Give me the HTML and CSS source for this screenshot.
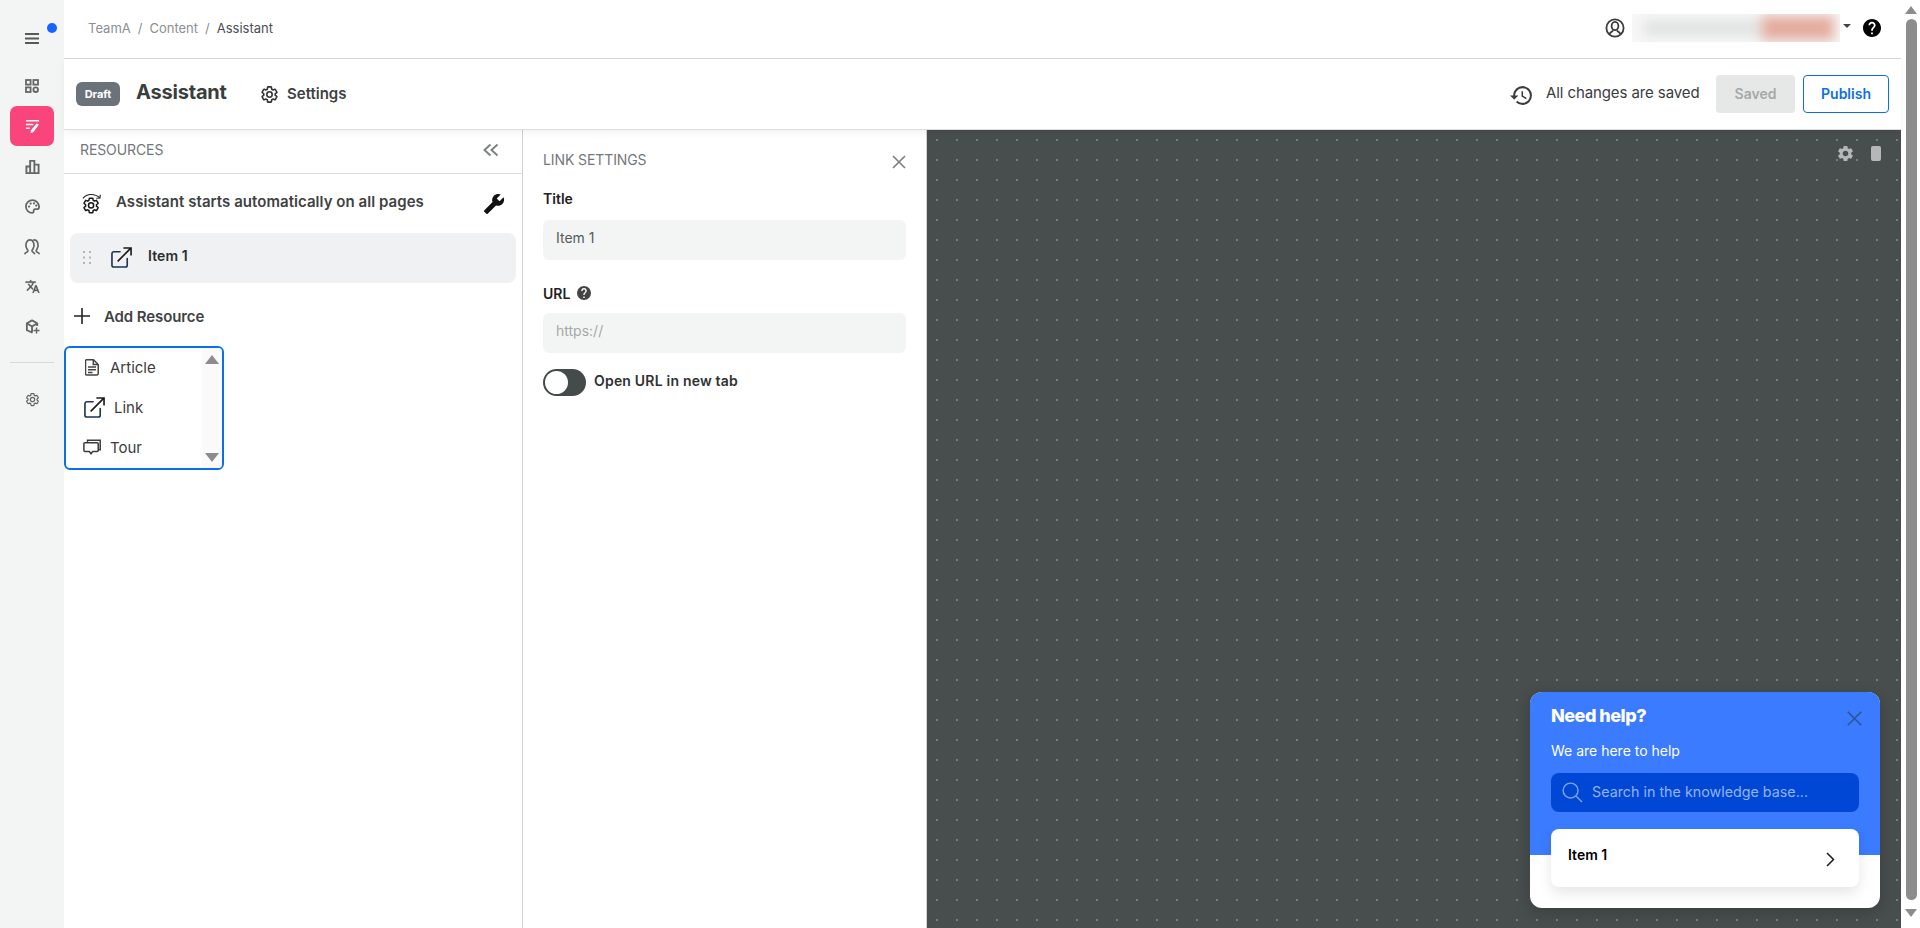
FILE: index.html
```html
<!DOCTYPE html>
<html lang="en">
<head>
<meta charset="utf-8">
<title>Assistant</title>
<link rel="stylesheet" href="styles.css">
</head>
<body>
<svg class="sprite" xmlns="http://www.w3.org/2000/svg">
  <symbol id="gear" viewBox="0 0 24 24"><path fill="none" stroke="currentColor" stroke-width="2" stroke-linejoin="round" d="M19.14 12.94c.04-.3.06-.61.06-.94 0-.32-.02-.64-.07-.94l2.03-1.58c.18-.14.23-.41.12-.61l-1.92-3.32c-.12-.22-.37-.29-.59-.22l-2.39.96c-.5-.38-1.03-.7-1.62-.94l-.36-2.54c-.04-.24-.24-.41-.48-.41h-3.84c-.24 0-.43.17-.47.41l-.36 2.54c-.59.24-1.13.57-1.62.94l-2.39-.96c-.22-.08-.47 0-.59.22L2.74 8.87c-.12.21-.08.47.12.61l2.03 1.58c-.05.3-.09.63-.09.94s.02.64.07.94l-2.03 1.58c-.18.14-.23.41-.12.61l1.92 3.32c.12.22.37.29.59.22l2.39-.96c.5.38 1.03.7 1.62.94l.36 2.54c.05.24.24.41.48.41h3.84c.24 0 .44-.17.47-.41l.36-2.54c.59-.24 1.13-.56 1.62-.94l2.39.96c.22.08.47 0 .59-.22l1.92-3.32c.12-.22.07-.47-.12-.61z"/><circle cx="12" cy="12" r="3.4" fill="none" stroke="currentColor" stroke-width="2"/></symbol>
  <symbol id="extlink" viewBox="0 0 22 22"><path fill="none" stroke="#1f3354" stroke-width="1.7" stroke-linecap="round" d="M9.5 5H3a2 2 0 0 0-2 2v12a2 2 0 0 0 2 2h12a2 2 0 0 0 2-2v-7"/><path fill="none" stroke="#1a1a1a" stroke-width="1.7" d="M7 15 20.5 1.5M13 1h8v8"/></symbol>
</svg>
<div class="page">
  <aside class="rail">
    <div class="rail-menu">
      <svg class="ico" viewBox="0 0 14 11"><path fill="#555a5a" d="M0 0h14v2H0zM0 4.5h14v2H0zM0 9h14v2H0z"/></svg>
      <span class="notif"></span>
    </div>
    <a class="rail-item"><svg class="ico" viewBox="0 0 14 14"><g fill="none" stroke="#636767" stroke-width="1.8"><rect x="1" y="1" width="4.6" height="4.6"/><rect x="8.4" y="1" width="4.6" height="4.6"/><rect x="1" y="8.4" width="4.6" height="4.6"/><circle cx="10.7" cy="10.7" r="2.3"/></g></svg></a>
    <a class="rail-item active"><svg class="ico-lg" viewBox="0 0 16 16"><path fill="#fff" d="M1 1h14v1.6H1zM1 5h8v1.6H1zM1 9h4v1.6H1z"/><path fill="#fff" d="M12.6 4.4l2.2 1.6-6 8-2.9 1 .5-3z"/></svg></a>
    <a class="rail-item"><svg class="ico-lg" viewBox="0 0 16 16"><path fill="none" stroke="#636767" stroke-width="2" d="M1.5 8H5.5V15H1.500zM5.500 2H10V15H5.500zM10 6H14.500V15H10z"/></svg></a>
    <a class="rail-item"><svg class="ico-lg" viewBox="0 0 16 16"><path fill="none" stroke="#636767" stroke-width="1.9" d="M8 1.200C4.200 1.200 1 4.200 1 8s3 6.800 6.600 6.800c1.200 0 1.800-.8 1.600-1.700-.2-1 .2-2.300 1.700-2.300h2.100c1.300 0 2-1 2-2.400C14.900 4.200 11.800 1.200 8 1.200z"/><g fill="#636767"><circle cx="4.300" cy="8" r="1.200"/><circle cx="6" cy="4.800" r="1.200"/><circle cx="9.600" cy="4.600" r="1.200"/><circle cx="12" cy="7" r="1.200"/></g></svg></a>
    <a class="rail-item"><svg class="ico-xl" viewBox="0 0 18 18"><g fill="none" stroke="#636767" stroke-width="1.800" stroke-linecap="round"><path d="M1 16.500c.5-1 2.300-1.500 3-2.500.5-.8-.3-1.300-.9-2.500C2 9.500 1.800 7 2.500 5c.8-2 2.300-3 3.900-3s3 1 3.700 3c.7 2 .5 4.500-.6 6.500-.6 1.200-1.400 1.700-.9 2.500.7 1 2 1.500 2.500 2.500"/><path d="M10.500 2c1.700 0 3.300 1 4 3 .7 2 .5 4.500-.6 6.500-.6 1.200-1.400 1.700-.9 2.500.7 1 2.400 1.500 3 2.500"/></g></svg></a>
    <a class="rail-item"><svg class="ico-lg" viewBox="0 0 24 24"><path fill="#555a5a" stroke="#555a5a" stroke-width=".6" d="M12.870 15.070l-2.540-2.510.03-.03c1.740-1.940 2.980-4.170 3.710-6.530H17V4h-7V2H8v2H1v1.990h11.170C11.500 7.920 10.440 9.750 9 11.350 8.070 10.320 7.300 9.190 6.690 8h-2c.73 1.630 1.730 3.170 2.980 4.560l-5.090 5.020L4 19l5-5 3.110 3.110.76-2.040zM18.500 10h-2L12 22h2l1.120-3h4.750L21 22h2l-4.500-12zm-2.620 7l1.620-4.330L19.120 17h-3.240z"/></svg></a>
    <a class="rail-item"><svg class="ico-lg" viewBox="0 0 16 16"><path fill="none" stroke="#636767" stroke-width="2" stroke-linejoin="round" d="M8 14.600 2 12V4.500L7.500 1.500l5.500 3v3M2 4.500 7.500 8l5.500-3.500M7.500 8v6.500"/><path fill="#636767" d="M11.500 9h1.600v2.400h2.400V13h-2.400v2.400h-1.600V13H9.100v-1.600h2.400z"/></svg></a>
    <hr class="rail-sep">
    <a class="rail-item"><svg class="ico-lg gear-grey"><use href="#gear"/></svg></a>
  </aside>

  <div class="main">
    <header class="topbar">
      <nav class="crumbs"><span>TeamA</span><i>/</i><span>Content</span><i>/</i><b>Assistant</b></nav>
      <div class="top-right">
        <svg class="user-ico" viewBox="0 0 20 20"><g fill="none" stroke="#3c3c3c" stroke-width="1.800"><circle cx="10" cy="10" r="8.600"/><ellipse cx="10" cy="8" rx="3.400" ry="4.200"/><path d="M4.500 16c1-2 2.600-2.200 3.500-3.500M15.500 16c-1-2-2.600-2.200-3.500-3.500"/></g></svg>
        <div class="blurbox"><span class="blur-a"></span><span class="blur-b"></span></div>
        <span class="caret"></span>
        <svg class="help-ico" viewBox="2 2 20 20"><path fill="#000" d="M12 2C6.480 2 2 6.480 2 12s4.480 10 10 10 10-4.480 10-10S17.520 2 12 2zm1 17h-2v-2h2v2zm2.070-7.750l-.9.920C13.450 12.900 13 13.500 13 15h-2v-.5c0-1.100.45-2.100 1.170-2.830l1.240-1.260c.37-.36.590-.86.590-1.410 0-1.100-.9-2-2-2s-2 .9-2 2H8c0-2.210 1.790-4 4-4s4 1.790 4 4c0 .88-.36 1.680-.93 2.250z"/></svg>
      </div>
    </header>

    <div class="toolbar">
      <span class="badge">Draft</span>
      <h1 class="doc-title">Assistant</h1>
      <a class="settings-link"><svg class="settings-ico"><use href="#gear"/></svg><span>Settings</span></a>
      <div class="save-area">
        <svg class="history-ico" viewBox="1 3 22 18"><path fill="#3c3c3c" d="M13 3a9 9 0 0 0-9 9H1l3.890 3.890.07.14L9 12H6c0-3.870 3.130-7 7-7s7 3.130 7 7-3.130 7-7 7c-1.930 0-3.680-.79-4.940-2.060l-1.420 1.420A8.954 8.954 0 0 0 13 21a9 9 0 0 0 0-18zm-1 5v5l4.280 2.540.72-1.210-3.500-2.080V8H12z"/></svg>
        <span class="save-text">All changes are saved</span>
        <button class="btn btn-saved">Saved</button>
        <button class="btn btn-publish">Publish</button>
      </div>
    </div>

    <div class="workspace">
      <section class="resources">
        <div class="res-head">
          <span class="caps">RESOURCES</span>
          <svg class="collapse-ico" viewBox="0 0 16 13"><path fill="none" stroke="#7d8282" stroke-width="2" d="M7.500 1 1.500 6.500l6 5.500M14.500 1l-6 5.500 6 5.500"/></svg>
        </div>
        <div class="auto-row">
          <svg class="auto-ico" viewBox="0 0 22 22"><path fill="none" stroke="#1a1a1a" stroke-width="1.200" d="M1 5C3 2.500 6 1 9.500 1c3.500 0 6.500 1 9 3.500"/><path fill="none" stroke="#1a1a1a" stroke-width="1.200" d="M15 5l3.800-.3.300-3.400"/><svg x="0" y="3" width="19" height="19" class="auto-gear"><use href="#gear"/></svg></svg>
          <span class="auto-text">Assistant starts automatically on all pages</span>
          <svg class="wrench-ico" viewBox="0 0 24 24"><path fill="#111" transform="matrix(-1 0 0 1 24 0)" d="M22.700 19l-9.100-9.100c.9-2.300.4-5-1.500-6.900-2-2-5-2.400-7.400-1.300L9 6 6 9 1.600 4.700C.4 7.100.9 10.100 2.900 12.100c1.900 1.900 4.600 2.400 6.900 1.500l9.100 9.100c.4.400 1 .4 1.400 0l2.300-2.300c.5-.4.5-1.100.1-1.400z"/></svg>
        </div>
        <div class="item-row">
          <svg class="drag-ico" viewBox="0 0 8 13"><g fill="#b3b5b5"><rect width="2" height="2"/><rect x="6" width="2" height="2"/><rect y="5.500" width="2" height="2"/><rect x="6" y="5.500" width="2" height="2"/><rect y="11" width="2" height="2"/><rect x="6" y="11" width="2" height="2"/></g></svg>
          <svg class="ext-ico"><use href="#extlink"/></svg>
          <span class="item-name">Item 1</span>
        </div>
        <div class="add-row">
          <svg class="plus-ico" viewBox="0 0 16 16"><path fill="#222" d="M7.200 0h1.600v7.200H16v1.600H8.800V16H7.200V8.800H0V7.200h7.200z"/></svg>
          <span class="add-text">Add Resource</span>
        </div>
        <div class="picker">
          <ul class="picker-list">
            <li class="picker-item">
              <svg class="pick-doc" viewBox="0 0 14 17"><path fill="none" stroke="#444" stroke-width="1.500" stroke-linejoin="round" d="M1.500.8h7l4.700 4.700v9.200a1.200 1.200 0 0 1-1.200 1.200H1.500a1 1 0 0 1-1-1V1.800a1 1 0 0 1 1-1z"/><path fill="none" stroke="#444" stroke-width="1.500" d="M3 8h8M3 10.800h8M3 13.600h4.500M8.300 1v4.500h4.700"/></svg>
              <span>Article</span>
            </li>
            <li class="picker-item item-link">
              <svg class="pick-ext"><use href="#extlink"/></svg>
              <span>Link</span>
            </li>
            <li class="picker-item">
              <svg class="pick-tour" viewBox="0 0 18 16"><g fill="none" stroke="#3c3c3c" stroke-width="1.500"><path d="M4.500 3V1.200h12.700v9.600h-2"/><path d="M1.900 3.800h12.300a1 1 0 0 1 1 1v6.600a1 1 0 0 1-1 1H9.800L8 14.800l-1.800-2.400H1.900a1 1 0 0 1-1-1V4.800a1 1 0 0 1 1-1z"/></g></svg>
              <span>Tour</span>
            </li>
          </ul>
          <div class="picker-scroll"><span class="arrow-up"></span><span class="arrow-down"></span></div>
        </div>
      </section>

      <section class="link-panel">
        <div class="link-head">
          <span class="caps">LINK SETTINGS</span>
          <svg class="close-ico" viewBox="0 0 14 14"><path fill="none" stroke="#7d8282" stroke-width="1.700" d="M1 1l12 12M13 1 1 13"/></svg>
        </div>
        <label class="field-label">Title</label>
        <div class="field value">Item 1</div>
        <label class="field-label url-label">URL
          <svg class="tip-ico" viewBox="2 2 20 20"><circle cx="12" cy="12" r="10" fill="#444"/><path fill="#fff" d="M11 17h2v2h-2zM12 5c-2.210 0-4 1.790-4 4h2c0-1.100.9-2 2-2s2 .9 2 2c0 .55-.22 1.050-.59 1.410l-1.240 1.260C11.450 12.400 11 13.400 11 14.500v.5h2c0-1.500.45-2.100 1.170-2.830l.9-.92C15.640 10.680 16 9.880 16 9c0-2.210-1.790-4-4-4z"/></svg>
        </label>
        <div class="field placeholder">https://</div>
        <div class="toggle-row">
          <span class="toggle"><span class="knob"></span></span>
          <span class="toggle-label">Open URL in new tab</span>
        </div>
      </section>

      <section class="canvas">
        <div class="canvas-tools">
          <svg class="tool-gear" viewBox="0 0 24 24"><path fill="#b5b8b8" d="M19.140 12.940c.04-.3.06-.61.06-.94 0-.32-.02-.64-.07-.94l2.030-1.580c.18-.14.23-.41.12-.61l-1.920-3.320c-.12-.22-.37-.29-.59-.22l-2.390.96c-.5-.38-1.030-.7-1.620-.94l-.36-2.540c-.04-.24-.24-.41-.48-.41h-3.840c-.24 0-.43.17-.47.41l-.36 2.540c-.59.24-1.130.57-1.620.94l-2.390-.96c-.22-.08-.47 0-.59.22L2.740 8.870c-.12.21-.08.47.12.61l2.030 1.580c-.05.3-.09.63-.09.94s.02.64.07.94l-2.030 1.580c-.18.14-.23.41-.12.61l1.920 3.320c.12.22.37.29.59.22l2.390-.96c.5.38 1.030.7 1.620.94l.36 2.540c.05.24.24.41.48.41h3.840c.24 0 .44-.17.47-.41l.36-2.540c.59-.24 1.130-.56 1.620-.94l2.390.96c.22.08.47 0 .59-.22l1.920-3.320c.12-.22.07-.47-.12-.61zM12 15.600c-1.980 0-3.600-1.620-3.600-3.600s1.620-3.600 3.600-3.600 3.600 1.620 3.600 3.600-1.620 3.600-3.600 3.600z"/></svg>
          <span class="tool-phone"></span>
        </div>
        <div class="widget">
          <div class="widget-top">
            <div class="widget-head">
              <h2 class="widget-title">Need help?</h2>
              <svg class="widget-close" viewBox="0 0 14 14"><path fill="none" stroke="#2c5596" stroke-width="1.500" d="M.7.7l12.600 12.600M13.300.7.7 13.300"/></svg>
            </div>
            <p class="widget-sub">We are here to help</p>
            <div class="widget-search">
              <svg class="search-ico" viewBox="0 0 22 22"><g fill="none" stroke="#7ea4e8" stroke-width="1.500"><circle cx="9" cy="9" r="7.800"/><path d="M14.600 14.600 21 21"/></g></svg>
              <span>Search in the knowledge base...</span>
            </div>
          </div>
          <div class="widget-card">
            <span class="card-name">Item 1</span>
            <svg class="chev-ico" viewBox="0 0 9 15"><path fill="none" stroke="#1a1a1a" stroke-width="1.500" d="M1 1l6.500 6.500L1 14"/></svg>
          </div>
        </div>
      </section>
    </div>
  </div>

  <div class="vscroll">
    <span class="sb-up"></span>
    <span class="sb-thumb"></span>
    <span class="sb-down"></span>
  </div>
</div>
</body>
</html>
```

FILE: styles.css
```css
* { box-sizing: border-box; }
html, body { margin: 0; height: 100%; overflow: hidden; }
body { font-family: "Inter", "Liberation Sans", sans-serif; color: #3a3d3d; background: #fff; }
.sprite { display: none; }
.page { display: flex; height: 928px; }

/* left rail */
.rail { width: 64px; flex: none; background: #f3f5f4; display: flex; flex-direction: column; align-items: center; padding-top: 18px; }
.rail-menu { position: relative; width: 44px; height: 40px; display: flex; align-items: center; justify-content: center; margin-bottom: 8px; }
.notif { position: absolute; left: 37px; top: 5px; width: 10px; height: 10px; border-radius: 50%; background: #1664ff; }
.ico { width: 14px; height: 14px; }
.rail-menu .ico { height: 11px; }
.ico-lg { width: 15px; height: 15px; }
.ico-xl { width: 17px; height: 17px; }
.rail-item { width: 44px; height: 40px; flex: none; display: flex; align-items: center; justify-content: center; border-radius: 7px; }
.rail-item.active { background: #f9447c; }
.gear-grey { color: #636767; }
.rail-sep { width: 44px; height: 1px; margin: 16px 0; border: 0; background: #d5d7d6; flex: none; }

/* main */
.main { flex: 1; min-width: 0; display: flex; flex-direction: column; }
.topbar { height: 59px; flex: none; display: flex; align-items: center; justify-content: space-between; padding: 0 20px 2px 24px; border-bottom: 1px solid #d6d8d8; }
.crumbs { display: flex; gap: 7px; font-size: 13px; color: #8b9090; align-items: center; margin-top: -1px; }
.crumbs i { font-style: normal; }
.crumbs b { font-weight: 400; color: #4a4f55; }
.top-right { display: flex; align-items: center; }
.user-ico { width: 20px; height: 20px; margin-right: 7px; }
.blurbox { width: 208px; height: 28px; background: #f7f7f7; position: relative; overflow: hidden; margin-right: -1px; }
.blur-a { position: absolute; left: 12px; top: 6px; width: 122px; height: 16px; background: #e0e3e2; filter: blur(6px); }
.blur-b { position: absolute; left: 130px; top: 2px; width: 72px; height: 24px; background: #e3ac9e; filter: blur(6px); }
.caret { width: 0; height: 0; margin: 0 12px 4px 4px; border-left: 4px solid transparent; border-right: 4px solid transparent; border-top: 4px solid #444; }
.help-ico { width: 18px; height: 18px; }

.toolbar { height: 71px; flex: none; display: flex; align-items: center; padding: 0 12px 3px 12px; border-bottom: 1px solid #dcdede; box-shadow: 0 3px 8px rgba(0,0,0,.05); position: relative; z-index: 2; background: #fff; }
.badge { width: 44px; height: 24px; border-radius: 6px; background: #6b7279; color: #fff; font-size: 11px; font-weight: 700; display: flex; align-items: center; justify-content: center; margin-top: 3px; }
.doc-title { margin: -2px 0 0 16px; font-size: 20px; font-weight: 700; color: #3a3d3d; letter-spacing: -.2px; width: 91px; white-space: nowrap; }
.settings-link { display: flex; align-items: center; margin: 2px 0 0 33px; font-size: 15px; font-weight: 600; color: #3f4242; }
.settings-ico { width: 19px; height: 19px; color: #333; margin-right: 8px; margin-top: 1px; }
.save-area { margin-left: auto; display: flex; align-items: center; margin-bottom: -3px; }
.history-ico { width: 23px; height: 19px; margin-right: 13px; margin-top: 2px; }
.save-text { font-size: 15px; color: #3a3d3d; width: 170px; white-space: nowrap; margin-top: -3px; letter-spacing: -.1px; }
.btn { height: 38px; border-radius: 4px; font: 600 14px "Inter", sans-serif; background: #fff; padding: 0 0 2px; }
.btn-saved { width: 79px; border: 0; background: #e6e8e7; color: #a5a8a8; }
.btn-publish { width: 86px; margin-left: 8px; border: 1px solid #0b6fe8; color: #0b6fe8; }

.workspace { flex: 1; min-height: 0; display: flex; }
.resources { width: 459px; flex: none; border-right: 1px solid #d0d2d2; }
.res-head { height: 44px; display: flex; align-items: center; justify-content: space-between; padding: 0 16px 4px 16px; border-bottom: 1px solid #dcdede; border-top-left-radius: 4px; }
.caps { font-size: 14px; color: #73787c; letter-spacing: -.1px; }
.collapse-ico { width: 16px; height: 14px; margin-right: 7px; }
.auto-row { height: 59px; display: flex; align-items: center; padding: 0 17px 0 18px; }
.auto-ico { width: 21px; height: 22px; margin-right: 13px; flex: none; color: #1a1a1a; }
.auto-text { font-size: 15px; font-weight: 600; color: #3f4242; letter-spacing: .05px; margin-top: -5px; }
.wrench-ico { width: 22px; height: 22px; margin-left: auto; }
.item-row { margin: 0 0 0 6px; width: 446px; height: 50px; background: #f0f1f3; border-radius: 8px; display: flex; align-items: center; padding-left: 13px; }
.drag-ico { width: 8px; height: 13px; margin-right: 20px; flex: none; margin-top: -2px; }
.ext-ico { width: 21px; height: 21px; margin-right: 16px; margin-top: -2px; }
.item-name { font-size: 14px; font-weight: 600; color: #2a2d2d; margin-top: -5px; letter-spacing: .1px; }
.add-row { height: 34px; margin-top: 16px; margin-bottom: 13px; display: flex; align-items: center; padding-left: 10px; }
.plus-ico { width: 16px; height: 16px; margin-right: 14px; }
.add-text { font-size: 15px; font-weight: 600; color: #3f4242; letter-spacing: -.1px; }
.picker { width: 160px; height: 124px; border: 2px solid #0b6fe8; border-radius: 6px; display: flex; overflow: hidden; }
.picker-list { flex: 1; list-style: none; margin: -1px 0 0; padding: 0; }
.picker-item { height: 40px; display: flex; align-items: center; padding-left: 19px; font-size: 15px; color: #3a3d3d; }
.pick-doc { width: 14px; height: 17px; margin-right: 11px; }
.pick-ext { width: 21px; height: 21px; margin-left: -1px; margin-right: 9px; }
.pick-tour { width: 18px; height: 16px; margin-left: -2px; margin-right: 9px; }
.picker-scroll { width: 20px; flex: none; background: #fafafa; display: flex; flex-direction: column; justify-content: space-between; align-items: center; padding: 7px 0 6px; }
.arrow-up { border-left: 7px solid transparent; border-right: 7px solid transparent; border-bottom: 9px solid #8c8c8c; }
.arrow-down { border-left: 7px solid transparent; border-right: 7px solid transparent; border-top: 9px solid #8c8c8c; }

.link-panel { width: 404px; flex: none; border-right: 1px solid #d0d2d2; padding: 0 20px; }
.link-head { height: 54px; display: flex; align-items: center; justify-content: space-between; padding-top: 4px; }
.close-ico { width: 14px; height: 14px; margin-top: 6px; }
.field-label { display: flex; align-items: center; font-size: 14px; font-weight: 600; color: #222; height: 18px; margin-top: 5px; }
.field { height: 40px; margin-top: 13px; background: #f3f5f4; border-radius: 6px; display: flex; align-items: center; padding: 0 13px 6px; font-size: 14px; }
.value { color: #555a5a; }
.placeholder { color: #a5a8a8; }
.url-label { margin-top: 24px; margin-bottom: -2px; }
.tip-ico { width: 14px; height: 14px; margin-left: 7px; }
.toggle-row { display: flex; align-items: center; margin-top: 16px; }
.toggle { width: 43px; height: 27px; border-radius: 14px; background: #454a4a; padding: 2px; flex: none; }
.knob { display: block; width: 23px; height: 23px; border-radius: 50%; background: #fff; }
.toggle-label { font-size: 14px; font-weight: 600; color: #2f3232; margin-left: 8px; margin-top: -5px; letter-spacing: .2px; }

.canvas { flex: 1; position: relative; background-color: #484d4d; background-image: radial-gradient(circle at 10px 10px, #767a7a 1.200px, transparent 1.400px); background-size: 20px 20px; }
.canvas-tools { position: absolute; right: 20px; top: 14px; display: flex; align-items: center; gap: 16px; }
.tool-gear { width: 19px; height: 19px; }
.tool-phone { width: 10px; height: 15px; border-radius: 2px; background: #b5b8b8; }
.widget { position: absolute; left: 603px; top: 562px; width: 350px; height: 216px; border-radius: 12px; overflow: hidden; background: #fff; box-shadow: 0 4px 16px rgba(0,0,0,.2); }
.widget-top { height: 163px; background: #3b7bff; padding: 0 21px; }
.widget-head { display: flex; justify-content: space-between; align-items: center; height: 44px; padding-top: 2px; }
.widget-title { margin: 0; font-size: 18px; font-weight: 800; color: #fff; letter-spacing: -.5px; }
.widget-close { width: 15px; height: 15px; margin-right: -3px; margin-top: 6px; }
.widget-sub { margin: 6px 0 0; font-size: 14px; color: #fff; line-height: 18px; }
.widget-search { margin-top: 13px; height: 39px; border-radius: 8px; background: #0047d6; display: flex; align-items: center; padding-left: 11px; font-size: 14.300px; color: #93b2ee; padding-bottom: 3px; }
.search-ico { width: 21px; height: 21px; margin-right: 9px; flex: none; margin-top: 3px; }
.widget-card { position: absolute; left: 21px; top: 137px; width: 308px; height: 58px; border-radius: 8px; background: #fff; box-shadow: 0 6px 14px rgba(0,0,0,.1); display: flex; align-items: center; justify-content: space-between; padding: 0 24px 0 17px; }
.card-name { font-size: 14px; font-weight: 600; color: #000; margin-top: -7px; }
.chev-ico { width: 9px; height: 15px; margin-top: 2px; }

.vscroll { width: 19px; flex: none; background: #fff; display: flex; flex-direction: column; align-items: flex-end; padding: 6px 3px 6px 0; }
.sb-up { margin: 0 0 5px; border-left: 6px solid transparent; border-right: 6px solid transparent; border-bottom: 8px solid #8c8c8c; }
.sb-thumb { width: 11px; height: 881px; border-radius: 6px; background: #8c8c8c; }
.sb-down { margin-top: 9px; border-left: 6px solid transparent; border-right: 6px solid transparent; border-top: 8px solid #8c8c8c; }
```
